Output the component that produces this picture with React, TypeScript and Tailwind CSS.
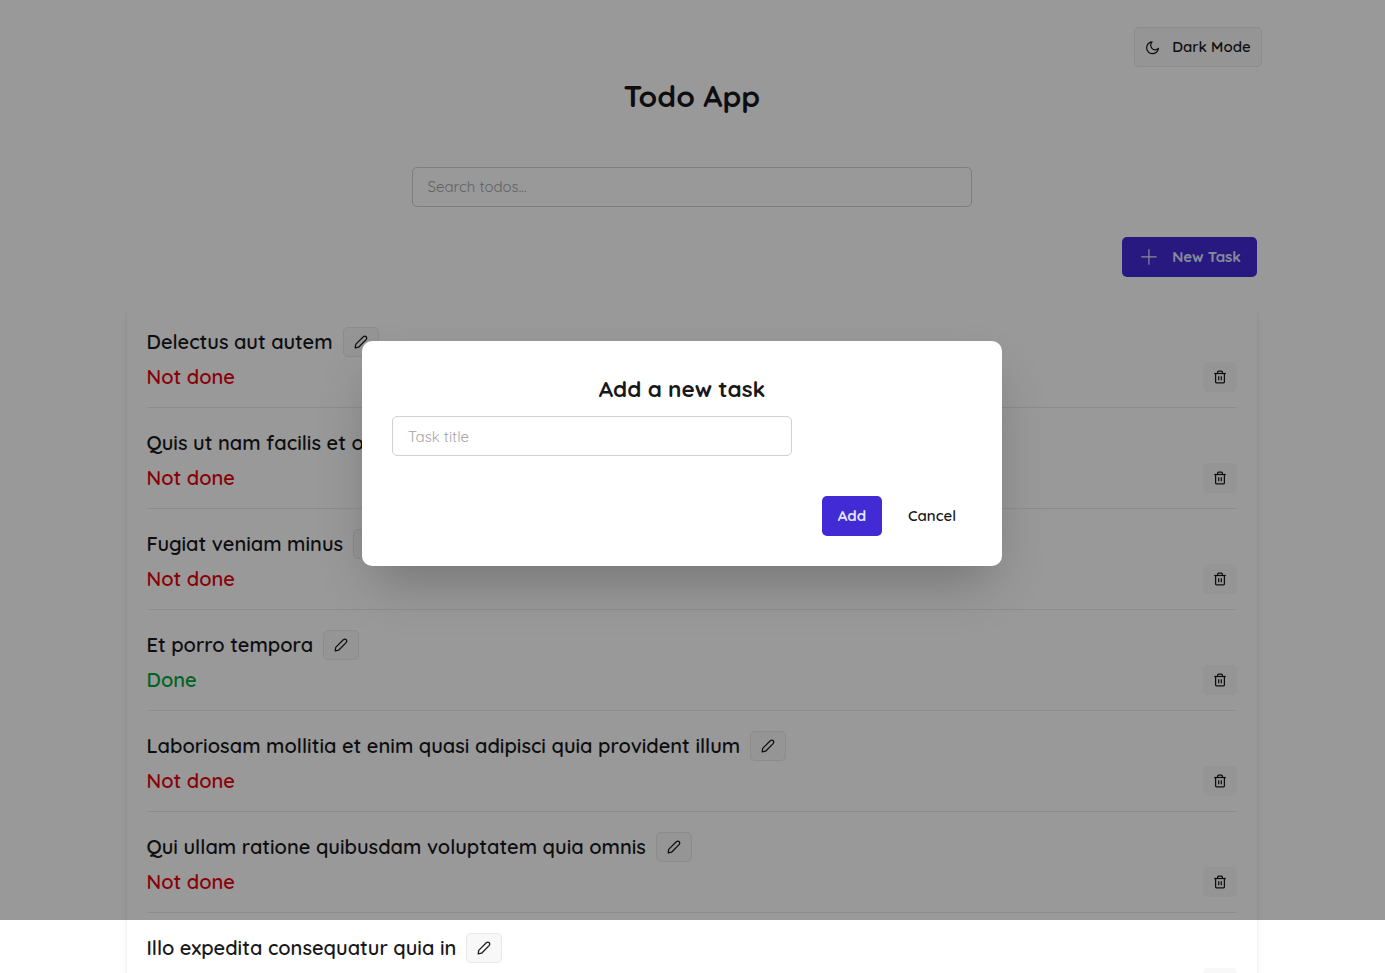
import React from "react";
import { VscAdd } from "react-icons/vsc";

type Todo = { title: string; done: boolean };

const todos: Todo[] = [
  { title: "Delectus aut autem", done: false },
  { title: "Quis ut nam facilis et officia qui", done: false },
  { title: "Fugiat veniam minus", done: false },
  { title: "Et porro tempora", done: true },
  { title: "Laboriosam mollitia et enim quasi adipisci quia provident illum", done: false },
  { title: "Qui ullam ratione quibusdam voluptatem quia omnis", done: false },
  { title: "Illo expedita consequatur quia in", done: false },
];

function PencilIcon() {
  return (
    <svg width="14" height="14" viewBox="0 0 14 14" fill="none" stroke="currentColor" strokeWidth="1.25" strokeLinejoin="round">
      <path d="M1.2 12.9 L1.7 9.4 L9.3 1.8 Q10.7 0.7 12.2 1.6 Q13.3 3.1 12.1 4.6 L4.6 12.2 Z" />
    </svg>
  );
}

function MoonIcon() {
  return (
    <svg width="15" height="15" viewBox="0 0 24 24" fill="none" stroke="currentColor" strokeWidth="2" strokeLinejoin="round">
      <path d="M21.5 13.6A9.5 9.5 0 1 1 11.4 3 7.3 7.3 0 0 0 21.5 13.6z" />
    </svg>
  );
}

function TrashIcon() {
  return (
    <svg width="14" height="14" viewBox="0 0 14 14" fill="none" stroke="currentColor" strokeWidth="1.25" strokeLinejoin="round">
      <path d="M1.2 3.5H12.8" />
      <path d="M4.6 3.3V2.2Q4.6 1.2 5.6 1.2H8.4Q9.4 1.2 9.4 2.2V3.3" />
      <path d="M2.6 3.5V12.1Q2.6 12.9 3.4 12.9H10.6Q11.4 12.9 11.4 12.1V3.5" />
      <path d="M5.7 6.2V10.2M8.3 6.2V10.2" />
    </svg>
  );
}

function TodoRow({ title, done }: Todo) {
  return (
    <li className="h-[101px] shrink-0 border-b border-[#ececec] pt-5">
      <div className="flex h-[30px] items-center gap-2.5">
        <span className="whitespace-nowrap text-[20px] leading-[30px] font-semibold">{title}</span>
        <button className="flex h-[30px] w-9 shrink-0 items-center justify-center rounded-[5px] border border-[#e9e9e9] bg-[#f8f8f8]">
          <PencilIcon />
        </button>
      </div>
      <div className="mt-[5px] flex h-[30px] items-center justify-between">
        <span className={done ? "text-[20px] leading-5 font-semibold text-[#00a63e]" : "text-[20px] leading-5 font-semibold text-[#e7000b]"}>
          {done ? "Done" : "Not done"}
        </span>
        <button className="flex h-[30px] w-[34px] items-center justify-center rounded-[5px] bg-[#f8f8f8]">
          <TrashIcon />
        </button>
      </div>
    </li>
  );
}

function NewTaskDialog() {
  return (
    <div className="absolute inset-x-0 top-0 h-[920px] bg-black/40">
      <div className="ml-[362px] mt-[341px] h-[225px] w-[640px] rounded-[10px] bg-white p-[30px] shadow-[0_25px_50px_-12px_rgba(0,0,0,0.25)]">
        <h2 className="pt-[3px] text-center text-[22.5px] leading-[30px] font-bold">Add a new task</h2>
        <input
          placeholder="Task title"
          className="mt-3 block h-10 w-[400px] rounded-[5px] border border-[#d1d1d1] px-[15px] text-[15px] placeholder:text-[#a3a3a5]"
        />
        <div className="mt-10 flex justify-end gap-2.5">
          <button className="h-10 w-[60px] rounded-[5px] bg-[#422ad5] text-[15px] font-bold text-[#e0e7ff]">Add</button>
          <button className="h-10 w-20 text-[15px] font-semibold">Cancel</button>
        </div>
      </div>
    </div>
  );
}

export default function App() {
  return (
    <div className="relative h-[973px] w-[1385px] overflow-hidden bg-white font-['Quicksand','Lato',sans-serif] text-[#18181b]">
      <div className="flex flex-col">
        <div className="flex justify-end pt-[27px] pr-[123px]">
          <button className="flex h-10 w-32 items-center justify-center gap-3 rounded-[5px] border border-[#e9e9e9] bg-[#f8f8f8] text-[15px] font-semibold">
            <MoonIcon />
            Dark Mode
          </button>
        </div>
        <h1 className="mt-[9px] pr-[1.5px] text-center text-[30px] leading-10 font-bold">Todo App</h1>
        <input
          placeholder="Search todos..."
          className="mt-[51px] ml-[412px] h-10 w-[560px] rounded-[5px] border border-[#d1d1d1] pr-[15px] pb-0.5 pl-[14.5px] text-[15px] placeholder:text-[#a3a3a5]"
        />
        <div className="mt-[30px] flex justify-end pr-32">
          <button className="flex h-10 w-[135px] items-center justify-center gap-[13.5px] rounded-[5px] bg-[#422ad5] pl-[1.5px] text-[15px] font-bold text-[#e0e7ff]">
            <VscAdd size={19} />
            New Task
          </button>
        </div>
        <ul className="mt-[30px] ml-[126.5px] flex w-[1130.5px] flex-col px-5 shadow-[0_4px_6px_-1px_rgba(0,0,0,0.1),0_2px_4px_-2px_rgba(0,0,0,0.1)]">
          {todos.map((t) => (
            <TodoRow key={t.title} title={t.title} done={t.done} />
          ))}
        </ul>
      </div>
      <NewTaskDialog />
    </div>
  );
}
